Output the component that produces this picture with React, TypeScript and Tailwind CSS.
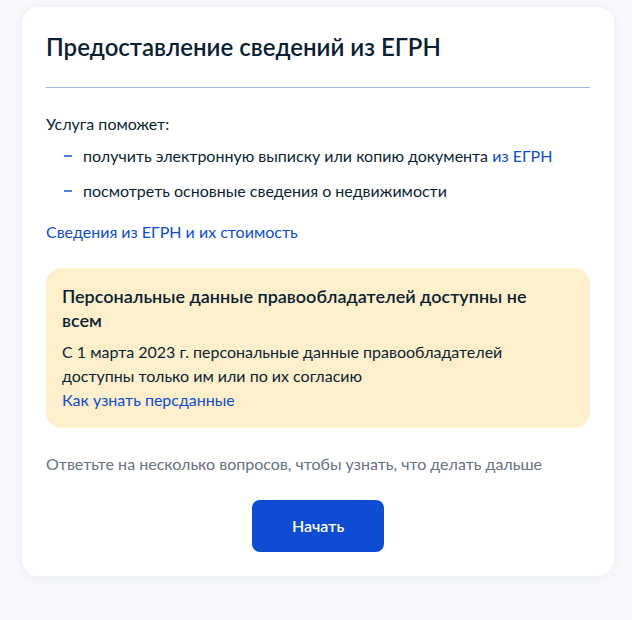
export default function App() {
  return (
    <div
      className="min-h-[620px] bg-[#f7f8fc] pt-[7px] pl-[22px]"
      style={{ fontFamily: "Lato, 'Noto Sans', sans-serif" }}
    >
      <div className="w-[592px] rounded-2xl bg-white p-6 text-[#0b1f33] shadow-[0_1px_8px_rgba(134,150,180,0.12)]">
        <h1 className="text-[24px] leading-8 font-semibold">Предоставление сведений из ЕГРН</h1>
        <div className="mt-6 h-px bg-[#a3b4dc]" />

        <p className="mt-6 text-base leading-6">Услуга поможет:</p>
        <ul className="mt-2 space-y-[11px] text-base leading-6">
          <li className="flex items-center pl-[18px]">
            <span className="mr-[11px] h-[2px] w-2 bg-[#4d80ea]" />
            <span>
              получить электронную выписку или копию документа{" "}
              <a className="text-[#0d4cd3]">из ЕГРН</a>
            </span>
          </li>
          <li className="flex items-center pl-[18px]">
            <span className="mr-[11px] h-[2px] w-2 bg-[#4d80ea]" />
            <span>посмотреть основные сведения о недвижимости</span>
          </li>
        </ul>

        <a className="mt-[17px] block text-base leading-6 text-[#0d4cd3]">
          Сведения из ЕГРН и их стоимость
        </a>

        <div className="mt-6 rounded-2xl bg-[#fdefcc] p-4">
          <h2 className="pr-10 text-[18px] leading-6 font-semibold">
            Персональные данные правообладателей доступны не всем
          </h2>
          <p className="mt-2 pr-10 text-base leading-6">
            С 1 марта 2023 г. персональные данные правообладателей доступны только им или по их согласию
          </p>
          <a className="block text-base leading-6 text-[#0d4cd3]">Как узнать персданные</a>
        </div>

        <p className="mt-6 text-base leading-6 text-[#66727f]">
          Ответьте на несколько вопросов, чтобы узнать, что делать дальше
        </p>

        <div className="mt-6 flex justify-center">
          <button className="h-[52px] w-[132px] rounded-lg bg-[#0d4cd3] text-base font-semibold text-white">
            Начать
          </button>
        </div>
      </div>
    </div>
  );
}
